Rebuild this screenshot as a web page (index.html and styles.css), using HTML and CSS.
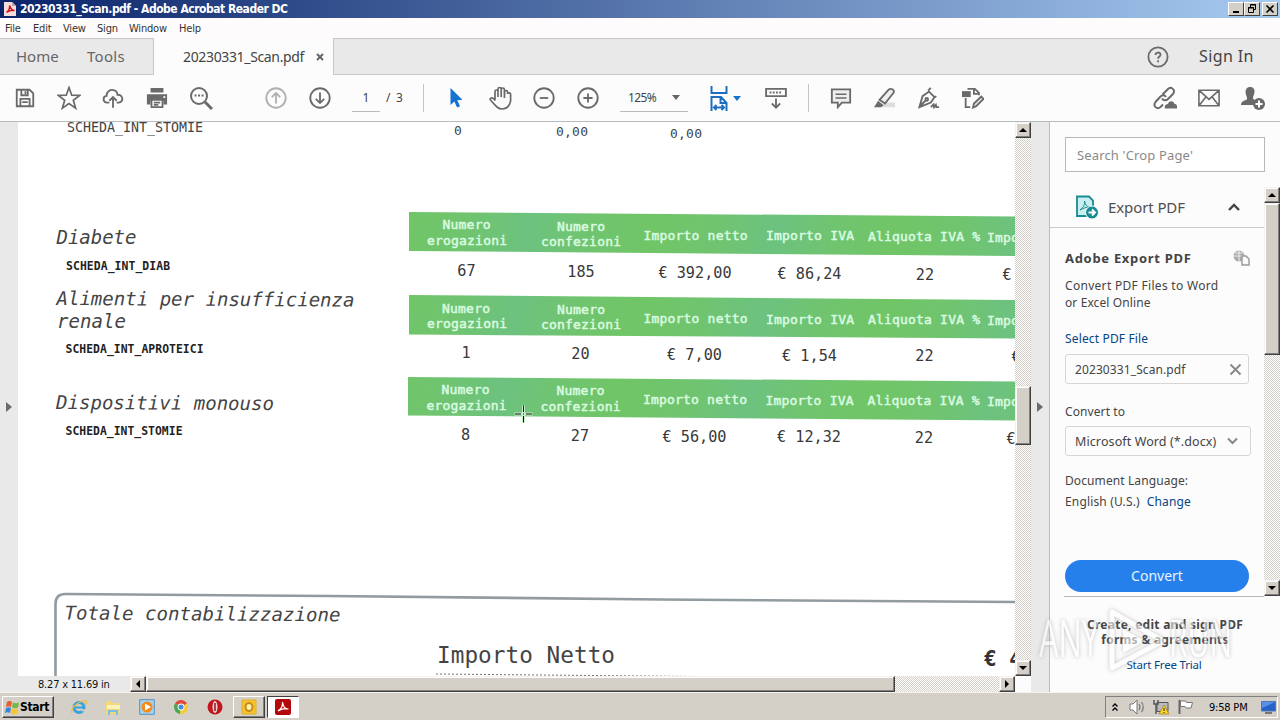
FILE: index.html
```html
<!DOCTYPE html>
<html lang="en">
<head>
<meta charset="utf-8">
<title>20230331_Scan.pdf - Adobe Acrobat Reader DC</title>
<link rel="stylesheet" href="styles.css">
</head>
<body>
<div class="desktop">
  <header class="titlebar">
    <svg class="app-icon" width="12" height="16" viewBox="0 0 12 16"><path d="M0 1h8l4 4v10H0z" fill="#f6dddd"/><path d="M8 1l4 4H8z" fill="#c9a0a0"/><path d="M2.500 11.500C5 9.500 6 7 5.500 4.500c2 4 2.500 5 5 5-3-.5-5 0-8 2z" fill="none" stroke="#d3131b" stroke-width="1.500"/></svg>
    <span class="title">20230331_Scan.pdf - Adobe Acrobat Reader DC</span>
    <div class="window-buttons">
      <button class="win-btn"><svg width="14" height="12" viewBox="0 0 14 12"><path d="M4 9h6" stroke="#000" stroke-width="2"/></svg></button>
      <button class="win-btn"><svg width="14" height="12" viewBox="0 0 14 12" fill="none" stroke="#000"><path d="M5.500 4.500V1.500h5v5H9M5 2h6"/><path d="M3.500 4.500h5v5h-5zM3 5h6"/></svg></button>
      <button class="win-btn win-close"><svg width="14" height="12" viewBox="0 0 14 12"><path d="M3.500 2.500l7 7m0-7l-7 7" stroke="#000" stroke-width="1.600"/></svg></button>
    </div>
  </header>
  <nav class="menubar"><span class="m-file">File</span><span class="m-edit">Edit</span><span class="m-view">View</span><span class="m-sign">Sign</span><span class="m-window">Window</span><span class="m-help">Help</span></nav>

  <div class="tabs">
    <span class="tab-home">Home</span><span class="tab-tools">Tools</span>
    <div class="tab-active"><span class="tab-name">20230331_Scan.pdf</span><svg width="8" height="8" viewBox="0 0 8 8"><path d="M1 1l6 6m0-6L1 7" stroke="#666" stroke-width="2"/></svg></div>
    <div class="account">
      <svg width="22" height="22" viewBox="0 0 22 22" fill="none" stroke="#6a6a6a" stroke-width="1.800"><circle cx="11" cy="11" r="9.600"/><path d="M8.500 9c0-3.300 5-3.200 5-.3 0 1.900-2.400 1.800-2.400 4M11.100 14.200v2"/></svg>
      <span class="signin">Sign In</span>
    </div>
  </div>

  <div class="toolbar">
    <span class="tool"><svg viewBox="0 0 24 24"><path d="M3 3h14l4 4v14H3zM7 21v-8h10v8M8 3v6h7V3M12.500 4.500v3M9 16.500h6"/></svg></span>
    <span class="tool"><svg class="wide" viewBox="0 0 24 24"><path class="thin" d="M12 1.500l2.700 7.700 8 .2-6.400 4.900 2.300 7.800L12 17.500l-6.600 4.600 2.300-7.800L1.300 9.400l8-.2z"/></svg></span>
    <span class="tool"><svg viewBox="0 0 24 24"><path d="M8 17H5.500C.5 17 .6 10 5 9.700 5 5 9 2.300 12.600 3.300c3 .7 4.300 3 4.300 5.200 6-.7 7.500 8.200 1.100 8.500h-2M12 22.500V11M8 15l4-4 4 4"/></svg></span>
    <span class="tool"><svg viewBox="0 0 24 24"><path fill="#6a6a6a" stroke="none" d="M5 1h14v5H5zM1 8h22v11h-4v-4H5v4H1z"/><path fill="#fff" d="M6 14h12v8H6zM8.500 17h7M8.500 19.500h5"/><path d="M19 11h2" stroke="#fff"/></svg></span>
    <span class="tool"><svg class="wide" viewBox="0 0 24 24"><circle cx="10" cy="10" r="8"/><path stroke-width="3" d="M16 16l7 7"/><path stroke-dasharray="2 1.500" d="M5.500 9.500h9"/></svg></span>
    <span class="tool nav-first dim"><svg viewBox="0 0 24 24"><circle cx="12" cy="12" r="10.600"/><path d="M12 18V7M7.500 11L12 6.500l4.500 4.500"/></svg></span>
    <span class="tool"><svg viewBox="0 0 24 24"><circle cx="12" cy="12" r="10.600"/><path d="M12 6v11M7.500 13l4.500 4.500 4.500-4.500"/></svg></span>
    <span class="page-current">1</span><span class="page-total">/ 3</span>
    <i class="divider"></i>
    <span class="tool after-divider"><svg viewBox="0 0 24 24"><path fill="#1473d0" stroke="none" d="M6 1v18.500l4.200-3.800 3 6.600 3.200-1.400-3-6.400 5.600-.5z"/></svg></span>
    <span class="tool"><svg class="wide" viewBox="0 0 24 24"><path class="thin" d="M7 14.500V5.500c0-2 3-2 3 0V11 3c0-2 3.200-2 3.200 0v8V3.500c0-2 3.200-2 3.200 0V12l.2-6c0-2 3-2 3 0v2c0-1.600 3-1.600 3 0v7c-1 5-4 8-8.500 8-5 0-7-4-12-9.500 0-2 3-2.500 4.900 1"/></svg></span>
    <span class="tool"><svg viewBox="0 0 24 24"><circle cx="12" cy="12" r="10.600"/><path d="M7.500 12h9"/></svg></span>
    <span class="tool"><svg viewBox="0 0 24 24"><circle cx="12" cy="12" r="10.600"/><path d="M7 12h10M12 7v10"/></svg></span>
    <span class="zoom-box"><span class="zoom-value">125%</span><i class="caret"></i></span>
    <span class="fit"><svg viewBox="0 0 22 28"><path fill="none" stroke="#1f6fbf" stroke-width="2" d="M3.500 2v7h15V2M3.500 27V13H13l5.500 6v8M12.500 13.500V19H18M6 23.500h10M8.500 21L6 23.500 8.500 26M13.500 21l2.500 2.500-2.500 2.500"/></svg></span>
    <i class="caret caret-blue"></i>
    <span class="tool keyboard"><svg viewBox="0 0 24 24"><path d="M1.200 2h21.600v8H1.200zM12 12.500v10M7.500 18l4.500 4.500 4.500-4.500"/><path stroke-dasharray="2 1.500" d="M5 6h14"/></svg></span>
    <i class="divider zoom-divider"></i>
    <span class="tool after-divider"><svg viewBox="0 0 24 24"><path fill="#eee" d="M2 2.500h20v14.500H13L8.500 22v-5H2z"/><path class="thin" d="M6 8h12M6 12h12"/></svg></span>
    <span class="tool"><svg viewBox="0 0 24 24"><path fill="#ddd" stroke="none" d="M12 17h11v5H5z"/><path fill="#eee" d="M6 14L16 3c2-2 7 0 5.500 3L12 18z"/><path fill="#6a6a6a" stroke="none" d="M4.500 15l6 5-3 2H0z"/></svg></span>
    <span class="tool"><svg viewBox="0 0 24 24"><path d="M12 5l6 6-4 6-12.500 5L5 10zM11 4l3-3M17 12l3-2M2 21l6-6"/><circle cx="9.500" cy="13.500" r="1.500"/><path d="M14 22l3-3 .5 3 2-2.500.5 2.500h3"/></svg></span>
    <span class="tool"><svg viewBox="0 0 24 24"><path d="M6 2h8l4.500 4.500V9M13 2v5.500h5M4 12v10h5"/><path fill="#6a6a6a" stroke="none" d="M0 4.500h9.500V11H0z"/><path fill="#ddd" d="M12 22.500l1-4.500 8-7.500 2.500 2.500-8 8z"/></svg></span>
    <div class="share">
      <span class="tool"><svg class="wide" viewBox="0 0 24 24"><path d="M9.500 8.500L15 3c3-3 8 1 5 5l-5 5c-2 2-5 1.500-6-.5M13 11c-1.500-2.500-4-2-5.500-.5L2.500 16c-3 4 1.500 8 5 5l2.500-2.500"/><path fill="#6a6a6a" stroke="none" d="M12 22.500c-1-3 1-4.500 3-4.500 1-4 6-3 6.500 0 2.500 0 3.500 3 2.500 4.500z"/></svg></span>
      <span class="tool"><svg viewBox="0 0 24 24"><path class="thin" d="M1 3.500h22v17H1zM1.500 4L12 13.500 22.500 4M1.500 20l7-9M22.500 20l-7-9"/></svg></span>
      <span class="tool"><svg class="wide" viewBox="0 0 24 24"><path fill="#6a6a6a" stroke="none" d="M9 1c3 0 5 2 4.500 5-.3 3-1.500 4-1.500 6 0 1.500 2 2 3 2.500-1 1-2 3-1.500 4.500H0c0-5 5-4 6-6 .5-2-1.500-4-1.500-7C4.500 3 6 1 9 1z"/><circle cx="18" cy="18" r="6" fill="#6a6a6a" stroke="none"/><path stroke="#fff" d="M18 14.500v7M14.500 18h7"/></svg></span>
    </div>
  </div>

  <main class="workspace">
    <aside class="rail rail-left"><i class="rail-arrow"></i></aside>
    <section class="viewer">
      <div class="view-row">
        <svg class="scan" viewBox="18 122 997 554" width="997" height="554">
          <defs>
            <linearGradient id="band" gradientUnits="userSpaceOnUse" x1="408" y1="212" x2="528" y2="232" spreadMethod="reflect">
              <stop offset="0" stop-color="#70c566"/><stop offset=".5" stop-color="#70c46f"/><stop offset="1" stop-color="#6cc27f"/>
            </linearGradient>
          </defs>
          <g class="slip"><text x="67" y="131.500" font-size="13.300" textLength="136">SCHEDA_INT_STOMIE</text><text x="454" y="135" font-size="13">0</text><text x="556" y="136" font-size="13" textLength="32">0,00</text><text x="670" y="137.500" font-size="13" textLength="32">0,00</text></g>
          <g class="group-title">
            <text x="56.500" y="243.500" textLength="80">Diabete</text>
            <text x="56.500" y="305" textLength="298" transform="rotate(.3 57 305)">Alimenti per insufficienza</text>
            <text x="57" y="327.500" textLength="69">renale</text>
            <text x="56" y="409" textLength="218" transform="rotate(.3 56 409)">Dispositivi monouso</text>
            <text x="64.500" y="619.500" textLength="276" transform="rotate(.4 65 619)">Totale contabilizzazione</text>
          </g>
          <g class="form-code">
            <text x="66" y="270" textLength="104">SCHEDA_INT_DIAB</text>
            <text x="65.500" y="352.500" textLength="138">SCHEDA_INT_APROTEICI</text>
            <text x="65.500" y="435" textLength="117">SCHEDA_INT_STOMIE</text>
          </g>
          <g fill="url(#band)">
            <path d="M409 212l607 4.500v39.500l-607-5z"/><path d="M409 295l607 5v38.500l-607-4z"/><path d="M408 377l608 4.500v39l-608-5z"/>
          </g>
          <g class="band-label">
            <text x="442.500" y="229" textLength="48">Numero</text><text x="427" y="244.500" textLength="80">erogazioni</text>
            <text x="557" y="230.500" textLength="48">Numero</text><text x="541" y="246" textLength="80">confezioni</text>
            <text x="643.500" y="239.500" textLength="104">Importo netto</text><text x="766" y="240" textLength="88">Importo IVA</text>
            <text x="868" y="241" textLength="112">Aliquota IVA %</text><text x="987" y="241.500" textLength="56">Importo</text>
            <text x="442" y="312.500" textLength="48">Numero</text><text x="427" y="328" textLength="80">erogazioni</text>
            <text x="557" y="314" textLength="48">Numero</text><text x="541" y="329" textLength="80">confezioni</text>
            <text x="643.500" y="322.500" textLength="104">Importo netto</text><text x="766" y="323.500" textLength="88">Importo IVA</text>
            <text x="868" y="324" textLength="112">Aliquota IVA %</text><text x="987" y="325" textLength="56">Importo</text>
            <text x="441.500" y="394" textLength="48">Numero</text><text x="426.500" y="409.500" textLength="80">erogazioni</text>
            <text x="556.500" y="395" textLength="48">Numero</text><text x="540.500" y="410.500" textLength="80">confezioni</text>
            <text x="643" y="403.500" textLength="104">Importo netto</text><text x="765.500" y="404.500" textLength="88">Importo IVA</text>
            <text x="867.500" y="405" textLength="112">Aliquota IVA %</text><text x="987" y="406" textLength="56">Importo</text>
          </g>
          <g class="amount">
            <text x="466.500" y="275.500">67</text><text x="581" y="276.500">185</text><text x="695" y="277.500">€ 392,00</text><text x="809.500" y="278.500">€ 86,24</text><text x="925" y="279.500">22</text><text x="1007" y="280">€</text>
            <text x="466" y="358">1</text><text x="580.500" y="359">20</text><text x="694.500" y="360">€ 7,00</text><text x="809.500" y="360.500">€ 1,54</text><text x="924.500" y="361">22</text><text x="1016" y="361.500">€</text>
            <text x="465.500" y="440">8</text><text x="580" y="441">27</text><text x="694.500" y="441.500">€ 56,00</text><text x="809" y="442">€ 12,32</text><text x="924" y="443">22</text><text x="1011" y="443.500">€</text>
          </g>
          <path d="M55.500 680V604q0-10 10-10L330 596l330 3.500L1016 602" fill="none" stroke="#929ba0" stroke-width="2.600"/>
          <text class="total-label" x="437" y="663" textLength="178">Importo Netto</text>
          <path d="M436 674l260 2.500" stroke="#777" stroke-dasharray="2 2"/>
          <text class="total-euro" x="984" y="665.500">€ 4</text>
          <g class="cross"><path class="cross-halo" d="M523.500 405.500v17M514.500 414h18"/><path d="M523.500 405.500v6.500m0 4v6.500M515 414h6m5 0h6m-9 0h1"/></g>
        </svg>
        <div class="scroll scroll-v"><span class="sb-btn"><i class="tri up"></i></span><span class="thumb"></span><span class="sb-btn"><i class="tri down"></i></span></div>
      </div>
      <footer class="view-foot">
        <span class="page-size">8.27 x 11.69 in</span>
        <div class="scroll scroll-h"><span class="sb-btn"><i class="tri left"></i></span><span class="thumb"></span><span class="sb-btn"><i class="tri right"></i></span></div>
      </footer>
    </section>
    <aside class="rail rail-right"><i class="rail-arrow"></i></aside>
    <aside class="panel">
      <div class="search"><span>Search 'Crop Page'</span></div>
      <div class="panel-scroll">
        <div class="panel-body">
          <div class="export-head">
            <svg width="24" height="24" viewBox="0 0 24 24"><path d="M2 1.500h12l4 4V21H2z" fill="#c9eef0" stroke="#178b92" stroke-width="1.800"/><path d="M5 15c4-3 5-6 4.500-9 1 5 3 6 6 6-4 0-7 1-10.500 3z" fill="none" stroke="#178b92"/><circle cx="17" cy="17.500" r="6.500" fill="#178b92" stroke="#fcfcfc"/><path d="M13.500 17.500h6M17 14.500l3 3-3 3" fill="none" stroke="#fff" stroke-width="2"/></svg>
            <span class="export-title">Export PDF</span>
            <svg width="12" height="8" viewBox="0 0 12 8"><path d="M1 7l5-5 5 5" fill="none" stroke="#444" stroke-width="2.400"/></svg>
          </div>
          <div class="export-form">
            <div class="form-title"><b>Adobe Export PDF</b><svg width="17" height="16" viewBox="0 0 17 16"><circle cx="6" cy="6" r="5.500" fill="#aaa"/><path d="M0 6h12M6 0v12M2 3h8" stroke="#eee"/><path d="M9 6h4l3 3v6H9z" fill="#fafafa" stroke="#999" stroke-width="1.400"/></svg></div>
            <p class="blurb"><span class="blurb-1">Convert PDF Files to Word</span><br><span class="blurb-2">or Excel Online</span></p>
            <a class="select-file">Select PDF File</a>
            <div class="field file-field"><span>20230331_Scan.pdf</span><svg width="13" height="13" viewBox="0 0 13 13"><path d="M1.500 1.500l10 10m0-10l-10 10" stroke="#888" stroke-width="1.900"/></svg></div>
            <div class="label">Convert to</div>
            <div class="field format-field"><span>Microsoft Word (*.docx)</span><svg width="11" height="8" viewBox="0 0 11 8"><path d="M1 1.500l4.500 4.500L10 1.500" fill="none" stroke="#888" stroke-width="2"/></svg></div>
            <div class="label lang-label">Document Language:</div>
            <div class="lang"><span>English (U.S.)</span><a>Change</a></div>
            <div class="convert"><span>Convert</span></div>
          </div>
        </div>
        <div class="scroll scroll-v scroll-panel"><span class="sb-btn"><i class="tri up"></i></span><span class="thumb"></span><span class="sb-btn"><i class="tri down"></i></span></div>
      </div>
      <div class="promo"><b class="promo-1">Create, edit and sign PDF</b><b class="promo-2">forms &amp; agreements</b><a>Start Free Trial</a></div>
    </aside>
  </main>

  <footer class="taskbar">
    <div class="start"><svg width="15" height="15" viewBox="0 0 15 15"><path d="M2 2c2-1.500 4-1 5 0L6 7C4 6 3 6 1 7z" fill="#e85d28"/><path d="M8 2.500c2 1 4 1 6 0l-1 5c-2 1-4 1-6 0z" fill="#74b84a"/><path d="M1 8c2-1 3-1 5 0l-1 5c-2-1-3-1-5 0z" fill="#3a86d8"/><path d="M7 8.500c2 1 4 1 6 0l-1 5c-2 1-4 1-6 0z" fill="#f7c52c"/></svg><b>Start</b></div>
    <div class="quick">
      <svg viewBox="0 0 16 16"><circle cx="8" cy="8.500" r="5" fill="none" stroke="#37a3dc" stroke-width="3"/><path d="M4 8.500h9" stroke="#37a3dc" stroke-width="2"/><path d="M10.500 10.300h5v2h-5z" fill="#d4d0c8"/><path d="M1 14C-1 9 9 1 15 2c1 1 0 3-1 4" fill="none" stroke="#e9bd42" stroke-width="1.200"/></svg>
      <svg viewBox="0 0 16 16"><path d="M1 2h5l1 2h8v11H1z" fill="#f1d87c"/><path d="M2 6h13v4H2z" fill="#fbf0b6"/><path d="M3 16v-5h10v5h-2v-3H5v3z" fill="#78bede"/></svg>
      <svg viewBox="0 0 16 16"><path d="M.7.7h14.600v14.600H.7z" fill="#a9d0ec" stroke="#4e94c4"/><circle cx="8" cy="8" r="5.500" fill="#f48a18"/><path d="M6 4.500l6 3.500-6 3.500z" fill="#fff"/></svg>
      <svg viewBox="0 0 16 16"><path d="M8 8L2 4.500a7 7 0 0 1 12 0z" fill="#e2473a"/><path d="M8 8L2 4.500A7 7 0 0 0 7 15z" fill="#47a851"/><path d="M8 8l6-3.500A7 7 0 0 1 7 15z" fill="#f7cb36"/><circle cx="8" cy="8" r="3.400" fill="#fff"/><circle cx="8" cy="8" r="2.500" fill="#4588e6"/></svg>
      <svg viewBox="0 0 16 16"><circle cx="8" cy="8" r="7.500" fill="#c3151d"/><ellipse cx="8" cy="8" rx="2.500" ry="6" fill="#e8d5d2"/><path d="M8 4v8" stroke="#91161a" stroke-width="1.500"/></svg>
    </div>
    <div class="task-btn"><svg width="16" height="16" viewBox="0 0 16 16"><path d="M1 1h14v14H1z" fill="#f4c52f" stroke="#e8ad22"/><ellipse cx="8" cy="8" rx="3.500" ry="4" fill="#fff1a8" stroke="#c9891c" stroke-width="2"/></svg></div>
    <div class="task-btn task-active"><svg width="16" height="16" viewBox="0 0 16 16"><rect width="16" height="16" rx="2" fill="#b3070c"/><path d="M3 12c3-2 5-5 4.500-9 1 5 2 7 6 7-3-.7-7 0-10.500 2z" fill="none" stroke="#fff" stroke-width="1.200"/></svg></div>
    <div class="tray">
      <svg class="chev" width="8" height="10" viewBox="0 0 8 10"><path d="M1.500 4.500L4 2l2.500 2.500M1.500 8.500L4 6l2.500 2.500" fill="none" stroke="#000" stroke-width="1.400"/></svg>
      <svg class="speaker" width="17" height="16" viewBox="0 0 17 16"><path d="M1 5h3l4-4v14l-4-4H1z" fill="#fff" stroke="#777"/><path d="M10 5q2 3 0 6M12.500 3q3.500 5 0 10" fill="none" stroke="#777" stroke-width="1.200"/></svg>
      <svg class="network" width="16" height="16" viewBox="0 0 16 16"><path d="M4 3.500h11v9H4z" fill="#b9bdc2" stroke="#555"/><path d="M1 1v4h4V1M3 5v10" fill="none" stroke="#555" stroke-width="1.500"/><path d="M11 6l5 9H6z" fill="#ffd728" stroke="#9b7a14" stroke-width=".7"/><path d="M11 9v3m0 1v1" stroke="#222"/></svg>
      <svg class="flag" width="17" height="16" viewBox="0 0 17 16"><path d="M2.500 1v14" stroke="#666" stroke-width="2"/><path d="M3.500 2h5l1 1.500h6L14 9H9L8 7.500H3.500z" fill="#fff" stroke="#777"/></svg>
      <span class="clock">9:58 PM</span>
      <svg class="monitor" width="15" height="13" viewBox="0 0 15 13"><path d="M.5.500h14v9.500H.5z" fill="#2762c8" stroke="#4b77b8"/><path d="M1 1h13L1 7z" fill="#5a91e6"/><path d="M4 12h7" stroke="#777" stroke-width="2"/></svg>
    </div>
  </footer>
  <svg class="watermark" width="196" height="68" viewBox="0 0 196 68">
    <text x="1" y="51" textLength="60" lengthAdjust="spacingAndGlyphs">ANY</text>
    <path d="M74 6l51 29-51 27z" fill="none" stroke="#fff" stroke-width="5" stroke-linejoin="round"/>
    <path d="M85 23l22 12-22 12z" fill="#fff"/>
    <text x="131" y="51" textLength="63" lengthAdjust="spacingAndGlyphs">RUN</text>
  </svg>
</div>
</body>
</html>
```
FILE: styles.css
```css
* { box-sizing: border-box; }
body { margin: 0; font-family: "Noto Sans", "Open Sans", sans-serif; color: #444; }
.desktop { position: relative; width: 1280px; height: 720px; overflow: hidden; display: flex; flex-direction: column; white-space: nowrap; }
button { padding: 0; font: inherit; }
svg { flex: none; }

.titlebar { height: 18px; flex: none; display: flex; align-items: center; padding: 0 2px 0 4px; background: linear-gradient(90deg, #0b246a, #a6caf0); color: #fff; }
.title { margin-left: 4px; font: bold 12px/18px "DejaVu Sans Condensed", "DejaVu Sans", sans-serif; font-stretch: condensed; letter-spacing: -.49px; }
.window-buttons { margin-left: auto; display: flex; }
.win-btn { width: 16px; height: 14px; display: grid; place-items: center; background: #d4d0c8; border: 1px solid; border-color: #fff #404040 #404040 #fff; }
.win-close { margin-left: 2px; }

.menubar { height: 20px; flex: none; display: flex; padding: 1px 0 0 5px; background: #fdfbfb; font: 11px/19px "DejaVu Sans Condensed", "DejaVu Sans", sans-serif; font-stretch: condensed; letter-spacing: -.2px; color: #333; }
.m-file { width: 28px; } .m-edit { width: 30px; } .m-view { width: 34px; } .m-sign { width: 32px; } .m-window { width: 50px; }

.tabs { height: 37px; flex: none; display: flex; align-items: center; background: #e9e9e9; border-top: 1px solid #c8c8c8; border-bottom: 1px solid #c8c8c8; font-size: 15px; color: #666; }
.tab-home { width: 71px; margin-left: 16px; margin-top: -1px; }
.tab-tools { width: 66px; margin-top: -1px; letter-spacing: .3px; }
.tab-active { width: 181px; height: 37px; display: flex; align-items: center; padding-left: 29px; background: #fcfcfc; border: 1px solid #c8c8c8; border-width: 0 1px; font-size: 14px; color: #444; }
.tab-name { width: 133px; letter-spacing: -.35px; }
.account { margin-left: auto; display: flex; align-items: center; padding-right: 26px; }
.signin { margin-left: 30px; width: 55px; margin-top: -1px; font-size: 16px; letter-spacing: .4px; color: #444; }

.toolbar { height: 47px; flex: none; display: flex; align-items: center; padding-left: 3px; background: #fcfcfc; border-bottom: 1px solid #b8bcbc; }
.tool { width: 44px; height: 46px; display: grid; place-items: center; flex: none; }
.tool svg { width: 22px; height: 22px; fill: none; stroke: #6a6a6a; stroke-width: 2; }
.tool svg.wide { width: 24px; height: 24px; }
.tool svg .thin { stroke-width: 1.700; }
.nav-first { margin-left: 31px; }
.dim svg { stroke: #b0b0b0; }
.page-current { margin-left: 10px; width: 28px; height: 28px; border-bottom: 1px solid #bbb; text-align: center; font-size: 12px; line-height: 28px; }
.page-total { margin-left: 6px; width: 17px; font-size: 12px; line-height: 28px; word-spacing: 2.500px; }
.divider { margin-left: 20px; width: 1px; height: 28px; background: #c4c4c4; }
.after-divider { margin-left: 10px; }
.zoom-box { margin-left: 10px; width: 68px; height: 28px; border-bottom: 1px solid #bbb; display: flex; align-items: center; padding: 0 8px; font-size: 12px; justify-content: space-between; }
.zoom-value { letter-spacing: -.6px; }
.caret { border: 4px solid transparent; border-top: 5px solid #666; border-bottom: 0; }
.fit { margin-left: 20px; width: 22px; height: 28px; }
.fit svg { width: 22px; height: 28px; }
.caret-blue { margin-left: 3px; border-top-color: #1473d0; }
.keyboard { margin-left: 13px; }
.zoom-divider { margin-left: 10px; }
.share { margin-left: auto; display: flex; padding-right: 5px; }

.workspace { flex: 1; min-height: 0; display: flex; background: #fff; }
.rail { width: 18px; display: flex; align-items: center; justify-content: center; background: #e9e9e9; }
.rail-right { width: 19px; border-right: 1px solid #bbb; }
.rail-arrow { margin-top: -1px; border: 5px solid transparent; border-left: 6px solid #6a6a6a; border-right: 0; }
.viewer { width: 1013px; display: flex; flex-direction: column; }
.view-row { height: 554px; display: flex; }
.scan { display: block; background: #fff; overflow: hidden; font-family: "DejaVu Sans Mono", monospace; fill: #444; }
.group-title { font-size: 19px; font-style: italic; }
.form-code { font-size: 11.400px; font-weight: bold; fill: #222; }
.band-label { font-size: 13px; fill: #d9fbe0; stroke: #d9fbe0; stroke-width: .5px; }
.amount { font-size: 15.200px; text-anchor: middle; fill: #383838; }
.total-label { font-size: 22.700px; }
.total-euro { font-size: 21px; font-weight: bold; fill: #333; }
.cross { fill: none; stroke: #111; }
.cross-halo { stroke: #c8efca; stroke-width: 3px; }

.scroll { display: flex; background: repeating-conic-gradient(#d4d0c8 0 25%, #fff 0 50%) 0 0 / 2px 2px; }
.sb-btn { width: 16px; height: 16px; flex: none; display: grid; place-items: center; }
.sb-btn, .thumb { background: #d4d0c8; border: 1px solid; border-color: #f4f2ee #404040 #404040 #f4f2ee; box-shadow: inset -1px -1px #808080, inset 1px 1px #fff; }
.scroll-v { width: 16px; flex-direction: column; }
.scroll-v .thumb { height: 59px; margin: 248px 0 auto; }
.tri { border: 4px solid transparent; }
.up { border-bottom-color: #000; border-top: 0; } .down { border-top-color: #000; border-bottom: 0; }
.left { border-right-color: #000; border-left: 0; } .right { border-left-color: #000; border-right: 0; }
.view-foot { height: 16px; display: flex; background: #fcfcfc; }
.page-size { width: 112px; padding-left: 20px; background: #e9e9e9; font: 11px/17px "DejaVu Sans Condensed", "DejaVu Sans", sans-serif; font-stretch: condensed; letter-spacing: -.2px; color: #111; }
.scroll-h { width: 885px; }
.scroll-h .thumb { width: 749px; margin-right: auto; }

.panel { width: 230px; padding-top: 15px; background: #fcfcfc; }
.search { margin-left: 15px; width: 200px; height: 35px; padding-left: 11px; background: #fff; border: 1px solid #b8b8b8; font-size: 13px; line-height: 35px; letter-spacing: .15px; color: #8a8a8a; }
.panel-scroll { margin-top: 15px; height: 409px; display: flex; }
.panel-body { width: 214px; }
.export-head { height: 41px; display: flex; align-items: center; padding-left: 25px; border-bottom: 1px solid #ccc; }
.export-title { margin-left: 9px; width: 120px; font-size: 15px; letter-spacing: -.1px; color: #505050; }
.export-form { height: 369px; margin-left: 14px; padding: 21px 0 0 1px; border-bottom: 1px solid #b8b8b8; font-size: 12px; line-height: 17px; }
.form-title { height: 18px; display: flex; align-items: center; width: 185px; justify-content: space-between; font-size: 13px; letter-spacing: .7px; }
.blurb { margin: 10px 0 0; }
.blurb-1 { letter-spacing: .3px; }
.blurb-2 { letter-spacing: .1px; }
.select-file { display: block; margin-top: 19px; letter-spacing: .15px; }
a { color: #064584; }
.field { display: flex; align-items: center; border: 1px solid #d6d6d6; border-radius: 3px; padding-left: 9px; }
.file-field { margin-top: 7px; width: 184px; height: 30px; justify-content: space-between; padding-right: 6px; letter-spacing: .1px; }
.label { margin-top: 19px; letter-spacing: .1px; }
.format-field { margin-top: 6px; width: 186px; height: 30px; justify-content: space-between; padding-right: 12px; font-size: 12.500px; letter-spacing: .1px; }
.lang-label { margin-top: 16px; }
.lang { margin-top: 4px; display: flex; gap: 7px; letter-spacing: .15px; }
.convert { margin-top: 50px; width: 184px; height: 32px; border-radius: 16px; background: #2680eb; color: #e8f4ff; text-align: center; font-size: 14px; line-height: 31px; }
.scroll-panel .thumb { height: 152px; margin-top: 0; }
.promo { display: flex; flex-direction: column; align-items: center; padding: 21px 0 0; font-size: 12px; line-height: 15px; letter-spacing: .27px; }
.promo a { margin: 10px 2px 0 0; font-size: 11.500px; letter-spacing: -.2px; }

.taskbar { height: 28px; flex: none; display: flex; align-items: center; padding: 1px 2px 0; background: #d4d0c8; border-top: 1px solid #f4f2ee; }
.start { width: 52px; height: 22px; display: flex; align-items: center; padding-left: 2px; border: 1px solid; border-color: #fff #404040 #404040 #fff; box-shadow: inset -1px -1px #808080; color: #000; font: bold 12px "DejaVu Sans Condensed", "DejaVu Sans", sans-serif; font-stretch: condensed; letter-spacing: -.35px; }
.quick { display: flex; gap: 18px; padding-left: 17px; }
.quick svg { width: 16px; height: 16px; }
.task-btn { width: 32px; height: 22px; margin-left: 10px; display: grid; place-items: center; border: 1px solid; border-color: #fff #404040 #404040 #fff; box-shadow: inset -1px -1px #808080; }
.task-active { margin-left: 2px; background: #fff; border-color: #404040 #fff #fff #404040; box-shadow: none; }
.tray { margin-left: auto; width: 173px; height: 22px; display: flex; align-items: center; padding-left: 5px; border: 1px solid; border-color: #808080 #fff #fff #808080; }
.speaker { margin-left: 10px; } .network { margin-left: 7px; } .flag { margin-left: 8px; }
.clock { margin-left: 15px; width: 52px; font: 11px "DejaVu Sans Condensed", "DejaVu Sans", sans-serif; font-stretch: condensed; letter-spacing: -.2px; color: #000; }

.watermark { position: absolute; left: 1038px; top: 606px; font: bold 49px "Open Sans", sans-serif; fill: #fff; opacity: .6; filter: drop-shadow(0 0 2px #999); }
.watermark text { font-weight: 400; font-size: 51px; }
```
